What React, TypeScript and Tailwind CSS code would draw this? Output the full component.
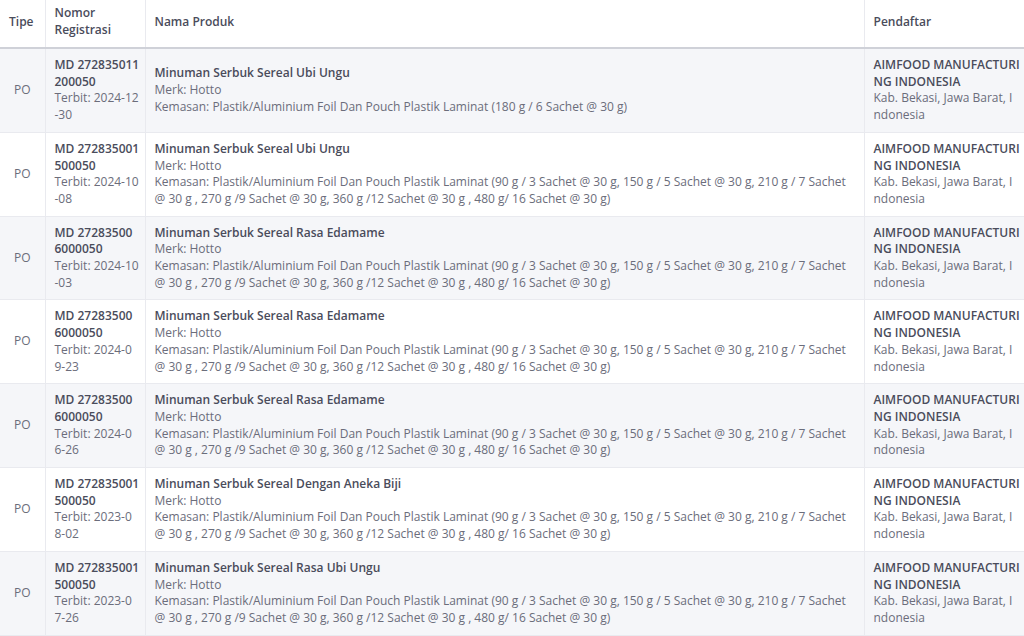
type Row = {
  nomor: string[];
  terbit: string[];
  nama: string;
  kemasan: string[];
};

const kemasanPanjang = [
  "Kemasan: Plastik/Aluminium Foil Dan Pouch Plastik Laminat (90 g / 3 Sachet @ 30 g, 150 g / 5 Sachet @ 30 g, 210 g / 7 Sachet",
  "@ 30 g , 270 g /9 Sachet @ 30 g, 360 g /12 Sachet @ 30 g , 480 g/ 16 Sachet @ 30 g)",
];

const rows: Row[] = [
  {
    nomor: ["MD 272835011", "200050"],
    terbit: ["Terbit: 2024-12", "-30"],
    nama: "Minuman Serbuk Sereal Ubi Ungu",
    kemasan: ["Kemasan: Plastik/Aluminium Foil Dan Pouch Plastik Laminat (180 g / 6 Sachet @ 30 g)"],
  },
  {
    nomor: ["MD 272835001", "500050"],
    terbit: ["Terbit: 2024-10", "-08"],
    nama: "Minuman Serbuk Sereal Ubi Ungu",
    kemasan: kemasanPanjang,
  },
  {
    nomor: ["MD 27283500", "6000050"],
    terbit: ["Terbit: 2024-10", "-03"],
    nama: "Minuman Serbuk Sereal Rasa Edamame",
    kemasan: kemasanPanjang,
  },
  {
    nomor: ["MD 27283500", "6000050"],
    terbit: ["Terbit: 2024-0", "9-23"],
    nama: "Minuman Serbuk Sereal Rasa Edamame",
    kemasan: kemasanPanjang,
  },
  {
    nomor: ["MD 27283500", "6000050"],
    terbit: ["Terbit: 2024-0", "6-26"],
    nama: "Minuman Serbuk Sereal Rasa Edamame",
    kemasan: kemasanPanjang,
  },
  {
    nomor: ["MD 272835001", "500050"],
    terbit: ["Terbit: 2023-0", "8-02"],
    nama: "Minuman Serbuk Sereal Dengan Aneka Biji",
    kemasan: kemasanPanjang,
  },
  {
    nomor: ["MD 272835001", "500050"],
    terbit: ["Terbit: 2023-0", "7-26"],
    nama: "Minuman Serbuk Sereal Rasa Ubi Ungu",
    kemasan: kemasanPanjang,
  },
];

function Lines({ lines, className }: { lines: string[]; className?: string }) {
  return (
    <>
      {lines.map((l, i) => (
        <div key={i} className={"whitespace-nowrap " + (className ?? "")}>
          {l}
        </div>
      ))}
    </>
  );
}

export default function App() {
  return (
    <div
      className="w-[1024px] h-[636px] overflow-hidden bg-white text-[12px] leading-[16.7px] text-[#6b6d7b]"
      style={{ fontFamily: '"Open Sans", "Liberation Sans", sans-serif' }}
    >
      <table className="w-full border-collapse table-fixed">
        <colgroup>
          <col className="w-[45px]" />
          <col className="w-[100px]" />
          <col className="w-[719px]" />
          <col className="w-[160px]" />
        </colgroup>
        <thead>
          <tr className="h-[48px] border-b-2 border-[#cfd1d8] text-left font-semibold text-[#4a4c5b]">
            <th className="px-[9px] pb-[3px] border-r border-[#e9eaef] font-semibold">Tipe</th>
            <th className="px-[9px] pb-[3px] border-r border-[#e9eaef] font-semibold">
              Nomor
              <br />
              Registrasi
            </th>
            <th className="px-[9px] pb-[3px] border-r border-[#e9eaef] font-semibold">Nama Produk</th>
            <th className="px-[9px] pb-[3px] font-semibold">Pendaftar</th>
          </tr>
        </thead>
        <tbody>
          {rows.map((r, i) => (
            <tr
              key={i}
              className={
                "h-[83.7px] border-b border-[#e9eaef] " + (i % 2 === 0 ? "bg-[#f5f6f9]" : "bg-white")
              }
            >
              <td className="px-[9px] py-2 border-r border-[#e9eaef] text-center align-middle">PO</td>
              <td className="px-[9px] py-2 border-r border-[#e9eaef] align-middle">
                <Lines lines={r.nomor} className="font-semibold text-[#4a4c5b]" />
                <Lines lines={r.terbit} />
              </td>
              <td className="px-[9px] py-2 border-r border-[#e9eaef] align-middle">
                <div className="font-semibold text-[#4a4c5b]">{r.nama}</div>
                <div>Merk: Hotto</div>
                <Lines lines={r.kemasan} />
              </td>
              <td className="px-[9px] py-2 align-middle">
                <Lines lines={["AIMFOOD MANUFACTURI", "NG INDONESIA"]} className="font-semibold text-[#4a4c5b]" />
                <Lines lines={["Kab. Bekasi, Jawa Barat, I", "ndonesia"]} />
              </td>
            </tr>
          ))}
        </tbody>
      </table>
    </div>
  );
}
